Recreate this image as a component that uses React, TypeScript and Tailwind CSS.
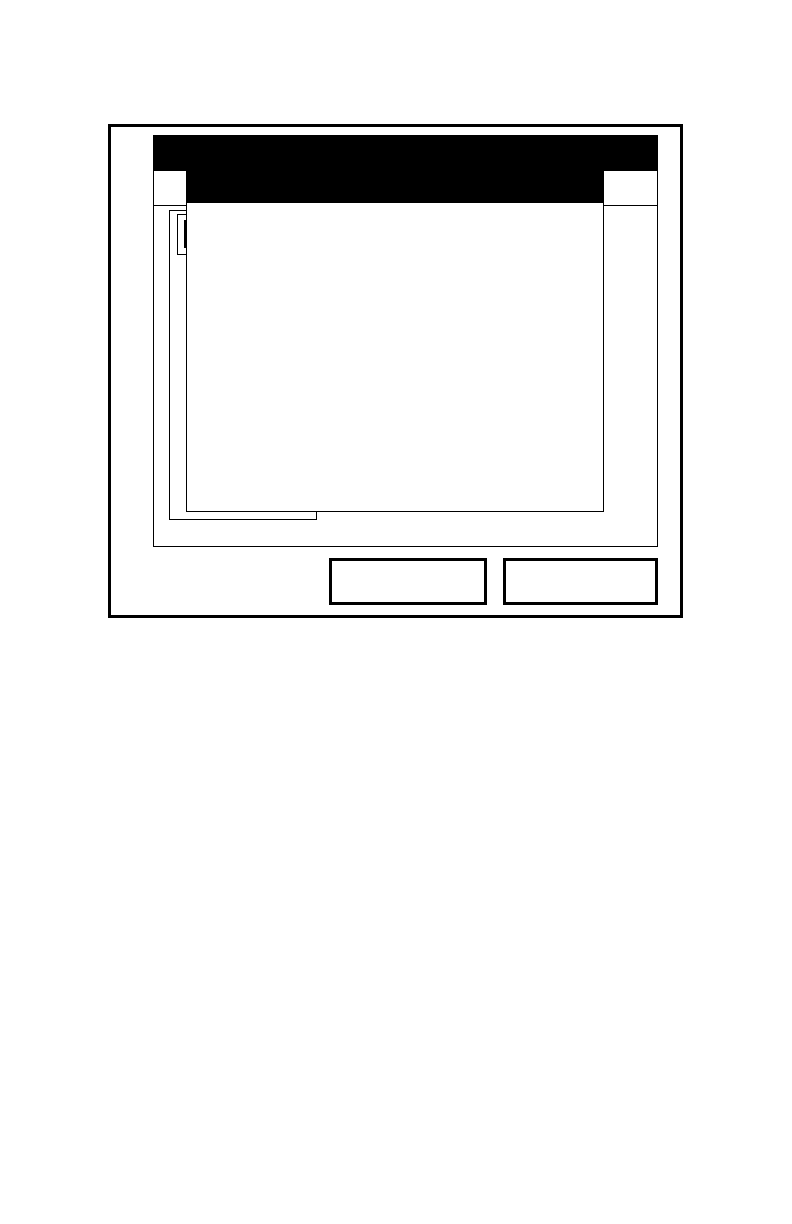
export default function App() {
  return (
    <div className="w-[792px] h-[1224px] bg-white pt-[124px] pl-[108px]">
      {/* Outer device frame */}
      <div className="relative w-[575px] h-[494px] border-[3px] border-black pl-[42px] pt-[8px]">
        {/* Main window */}
        <div className="w-[505px] h-[412px] border border-black flex flex-col">
          <div className="h-[35px] bg-black shrink-0" />
          <div className="h-[35px] border-b border-black shrink-0" />
          <div className="pl-[15px] pt-[4px]">
            <div className="w-[148px] h-[310px] border border-black pl-[7px] pt-[3px]">
              <div className="w-[40px] h-[41px] border border-black pl-[6px] pt-[5px]">
                <div className="w-[4px] h-[28px] bg-black" />
              </div>
            </div>
          </div>
        </div>

        {/* Soft keys */}
        <div className="w-[505px] mt-[11px] flex justify-end gap-[16px]">
          <div className="w-[158px] h-[47px] border-[3px] border-black" />
          <div className="w-[155px] h-[47px] border-[3px] border-black" />
        </div>

        {/* Popup dialog over the window */}
        <div className="absolute left-[75px] top-[43px] w-[418px] h-[342px] border border-black bg-white flex flex-col">
          <div className="h-[32px] bg-black shrink-0" />
        </div>
      </div>
    </div>
  );
}
